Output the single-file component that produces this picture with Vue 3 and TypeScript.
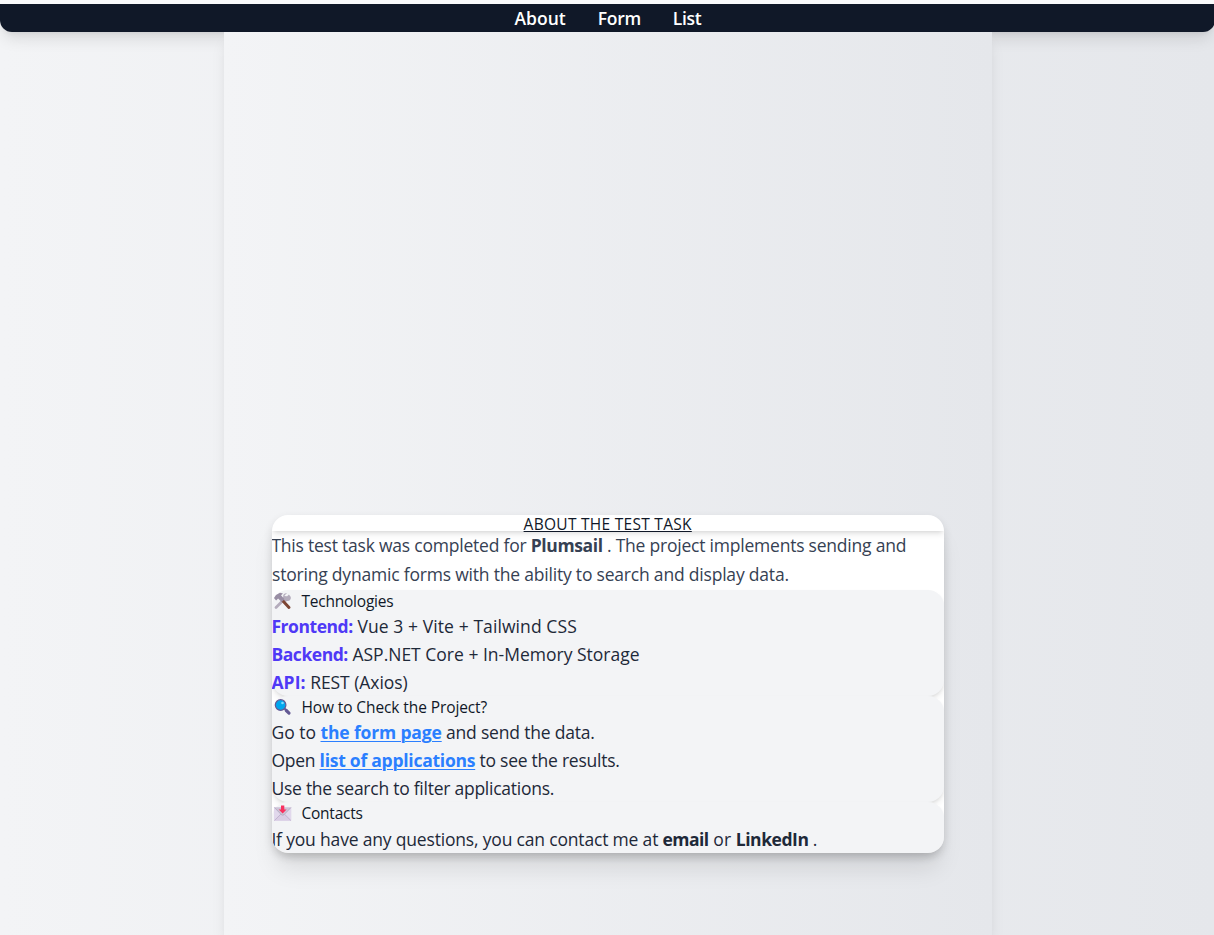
<script setup lang="ts">
interface Tech {
  label: string
  value: string
  cls: string
}

const links: { name: string; cls: string }[] = [
  { name: 'About', cls: 'about' },
  { name: 'Form', cls: 'form' },
  { name: 'List', cls: 'list' },
]

const stack: Tech[] = [
  { label: 'Frontend:', value: 'Vue 3 + Vite + Tailwind CSS', cls: 'front' },
  { label: 'Backend:', value: 'ASP.NET Core + In-Memory Storage', cls: 'back' },
  { label: 'API:', value: 'REST (Axios)', cls: 'api' },
]
</script>

<template>
  <div class="page">
    <nav class="nav">
      <a v-for="l in links" :key="l.name" :class="l.cls">{{ l.name }}</a>
    </nav>
    <main class="main">
      <article class="card">
        <h1 class="title"><span>ABOUT THE TEST TASK</span></h1>
        <p class="intro">
          <span class="i1">This test task was completed for <b>Plumsail</b> . The project implements sending and</span><br />
          <span class="i2">storing dynamic forms with the ability to search and display data.</span>
        </p>
        <section class="section">
          <h2>
            <svg class="icon" viewBox="0 0 22 22">
              <path d="M4 17.5 14 7.5" stroke="#b4acbc" stroke-width="2.8" stroke-linecap="round" />
              <path d="M17.7 3.5 15 6.2l-1.8-1.8L15.8 2.3C13.5 1.9 11.5 3.6 12 6l-1 2 3 3 2-1c2.5.4 4-1.8 3.6-4.1z" transform="translate(-.8 1)" fill="#b4acbc" />
              <path d="m10.5 10.5 6.5 7" stroke="#7d4533" stroke-width="3" stroke-linecap="round" />
              <path d="m2 8 2-3 4-2.2 3 .7-2 1.8 3.5 4-2.8 2.7-3.6-3.5-2 2z" fill="#998ea4" />
            </svg>
            <span class="t1">Technologies</span>
          </h2>
          <ul>
            <li v-for="t in stack" :key="t.label" :class="t.cls"><strong>{{ t.label }}</strong> {{ t.value }}</li>
          </ul>
        </section>
        <section class="section">
          <h2>
            <svg class="icon" viewBox="0 0 22 22">
              <path d="m12 12 3 3" stroke="#635994" stroke-width="2" />
              <path d="m14.3 14.5 2.7 2.6" stroke="#635994" stroke-width="3.2" stroke-linecap="round" />
              <circle cx="8.6" cy="9" r="5.3" fill="#00a6ed" stroke="#635994" stroke-width="1.2" />
              <circle cx="10.5" cy="7" r="1.3" fill="#7bdcff" />
            </svg>
            <span class="t2">How to Check the Project?</span>
          </h2>
          <ul>
            <li class="s1">Go to <a>the form page</a><span> and send the data.</span></li>
            <li class="s2">Open <a>list of applications</a> to see the results.</li>
            <li class="s3">Use the search to filter applications.</li>
          </ul>
        </section>
        <section class="section">
          <h2>
            <svg class="icon" viewBox="0 0 22 22">
              <rect x="2" y="5" width="17.3" height="14" rx=".8" fill="#e1d8ec" />
              <path d="M2.4 18.5 9 12h3.3l6.6 6.5" fill="#d9cde4" stroke="#b4a5c4" stroke-width=".7" />
              <path d="m2.4 5.5 7 7.2q1.3 1 2.6 0l7-7.2" fill="#cdc4d6" stroke="#aaa0b8" stroke-width=".7" />
              <path d="M9 3.5h3.3v4h2.3l-3.95 4-3.95-4H9z" fill="#f8315f" />
            </svg>
            <span class="t3">Contacts</span>
          </h2>
          <p class="contact">If you have any questions, you can contact me at <b class="mail">email</b><span class="or"> or </span><b>LinkedIn</b> .</p>
        </section>
      </article>
    </main>
  </div>
</template>

<style>
html,
body {
  margin: 0;
  height: 100%;
  overflow: hidden;
}
</style>

<style scoped>
.page {
  box-sizing: border-box;
  height: 935px;
  padding-top: 4px;
  display: flex;
  flex-direction: column;
  font-family: 'Open Sans', 'Noto Sans', sans-serif;
  font-size: 17.5px;
  color: #1e2939;
  background: linear-gradient(to right, #f3f4f6, #e5e7eb) 0 4px no-repeat, #f9fafb;
}
.nav {
  position: relative;
  display: flex;
  justify-content: center;
  gap: 32px;
  height: 28px;
  line-height: 29px;
  flex: none;
  padding-left: 1px;
  margin-right: -1px;
  background: #101828;
  color: #fff;
  font-weight: 600;
  border-radius: 0 0 12px 12px;
  box-shadow: 0 10px 15px -3px rgba(0, 0, 0, 0.1), 0 4px 6px -4px rgba(0, 0, 0, 0.1);
}
.nav a {
  white-space: nowrap;
}
.form,
.list {
  letter-spacing: -0.3px;
}
.main {
  position: relative;
  width: 672px;
  flex: 1;
  margin: 0 auto;
  left: 1px;
  padding: 0 48px;
  background: linear-gradient(to right, #f3f4f6, #e5e7eb);
  box-shadow: 0 10px 15px -3px rgba(0, 0, 0, 0.1), 0 4px 6px -4px rgba(0, 0, 0, 0.1);
}
.card {
  margin-top: 483px;
  background: #fff;
  border-radius: 16px;
  overflow: hidden;
  text-indent: -0.6px;
  box-shadow: 0 20px 25px -5px rgba(0, 0, 0, 0.1), 0 8px 10px -6px rgba(0, 0, 0, 0.1), 0 4px 10px rgba(0, 0, 0, 0.12);
}
.title {
  margin: 0;
  height: 16px;
  line-height: 18px;
  font-size: 15.5px;
  font-weight: 400;
  letter-spacing: 0.28px;
  text-align: center;
  color: #101828;
  box-shadow: 0 4px 6px -1px rgba(0, 0, 0, 0.1), 0 2px 4px -2px rgba(0, 0, 0, 0.1);
}
.title span {
  text-decoration: underline;
  text-underline-offset: 1px;
  text-decoration-thickness: 1px;
}
.intro {
  margin: 0;
  line-height: 29.25px;
  color: #364153;
  white-space: nowrap;
}
.i1 {
  letter-spacing: -0.22px;
}
.i1 b {
  letter-spacing: -0.38px;
}
.i2 {
  letter-spacing: -0.2px;
}
.section {
  background: #f3f4f6;
  border-radius: 16px;
  box-shadow: 0 4px 6px -1px rgba(0, 0, 0, 0.1), 0 2px 4px -2px rgba(0, 0, 0, 0.1);
}
h2 {
  margin: 0;
  display: flex;
  align-items: center;
  gap: 8px;
  height: 22px;
  line-height: 22px;
  font-size: 15.5px;
  font-weight: 400;
  color: #101828;
}
.t1,
.t3 {
  letter-spacing: -0.22px;
}
.t2 {
  letter-spacing: -0.1px;
}
.icon {
  width: 22px;
  height: 22px;
  fill: none;
  flex: none;
}
ul {
  margin: 0;
  padding: 0;
  list-style: none;
}
li {
  height: 28px;
  line-height: 28.5px;
  white-space: nowrap;
}
strong {
  color: #4f39f6;
  font-weight: 700;
  letter-spacing: -0.45px;
}
.front {
  letter-spacing: 0.09px;
}
.api {
  letter-spacing: -0.05px;
}
.api strong {
  letter-spacing: 0.1px;
}
li a {
  color: #2b7fff;
  font-weight: 700;
  text-decoration: underline;
  text-decoration-thickness: 1px;
  text-underline-offset: 2px;
}
.s1 a {
  letter-spacing: -0.15px;
}
.s1 span {
  letter-spacing: -0.2px;
}
.s2,
.s3 {
  letter-spacing: -0.25px;
}
.contact {
  margin: 0;
  height: 29.25px;
  line-height: 31px;
  letter-spacing: -0.18px;
  white-space: nowrap;
}
.contact b {
  letter-spacing: -0.45px;
}
.contact .mail {
  letter-spacing: -0.55px;
}
.or {
  letter-spacing: 0.1px;
}
</style>
